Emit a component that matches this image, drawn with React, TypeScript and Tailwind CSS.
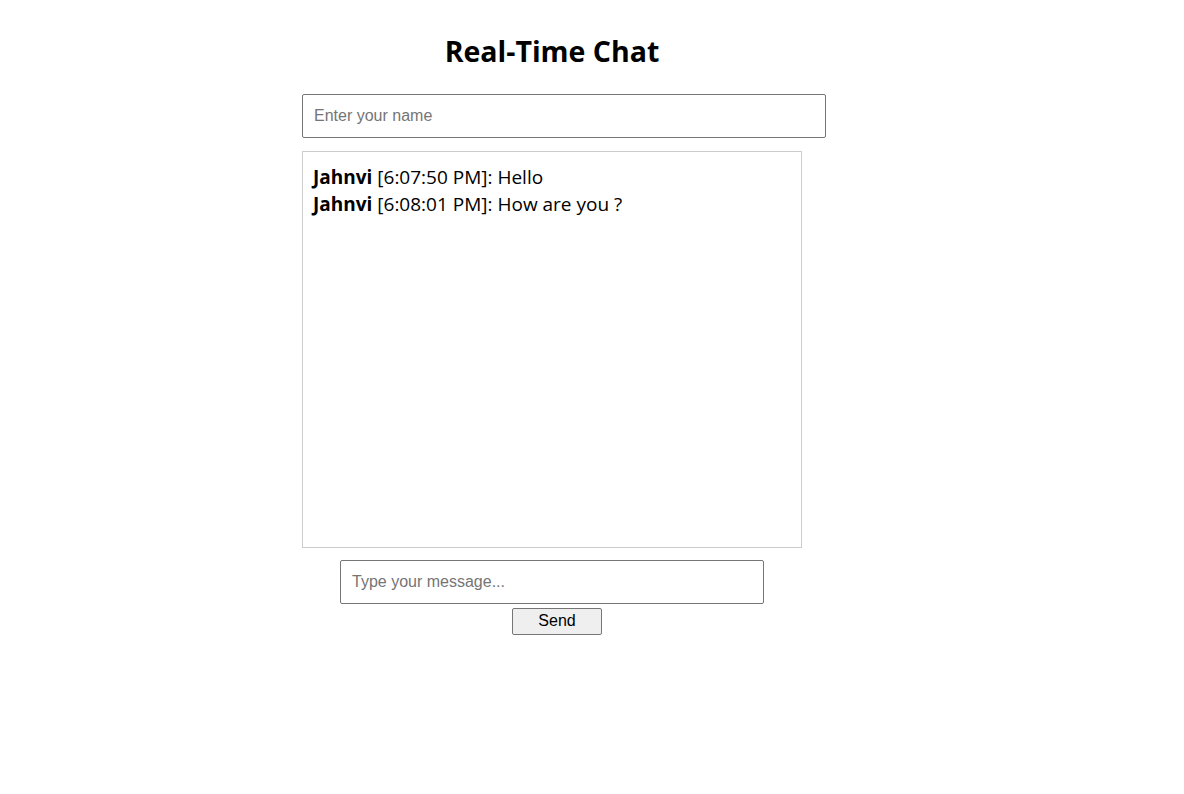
const messages = [
  { user: "Jahnvi", time: "6:07:50 PM", text: "Hello" },
  { user: "Jahnvi", time: "6:08:01 PM", text: "How are you ?" },
];

const field =
  "box-content block h-[20px] rounded-[2px] border border-[#767676] px-[11px] py-[11px] font-['Liberation_Sans',Arial,sans-serif] text-[16px] text-black outline-none placeholder:text-[#757575]";

export default function App() {
  return (
    <div className="min-h-[794px] bg-white pl-[302px] pt-[33px]">
      <div className="w-[500px]">
        <h1 className="text-center font-['Open_Sans',sans-serif] text-[28.5px] font-bold leading-[36px] text-black">
          Real-Time Chat
        </h1>
        <input type="text" placeholder="Enter your name" className={`mt-[25px] w-full ${field}`} />
        <div className="mt-[13px] h-[397px] w-[500px] border border-[#cccccc] px-[10px] pt-[12px] font-['Open_Sans',sans-serif] text-[19px] leading-[27px] text-black">
          {messages.map((m, i) => (
            <div key={i}>
              <strong className="font-bold">{m.user}</strong> [{m.time}]: {m.text}
            </div>
          ))}
        </div>
        <div className="mt-[12px] flex flex-col items-center">
          <input type="text" placeholder="Type your message..." className={`w-[400px] ${field}`} />
          <button className="ml-[10px] mt-[4px] h-[27px] w-[90px] rounded-[2px] border border-[#767676] bg-[#efefef] pb-[1px] font-['Liberation_Sans',Arial,sans-serif] text-[16px] text-black">
            Send
          </button>
        </div>
      </div>
    </div>
  );
}
